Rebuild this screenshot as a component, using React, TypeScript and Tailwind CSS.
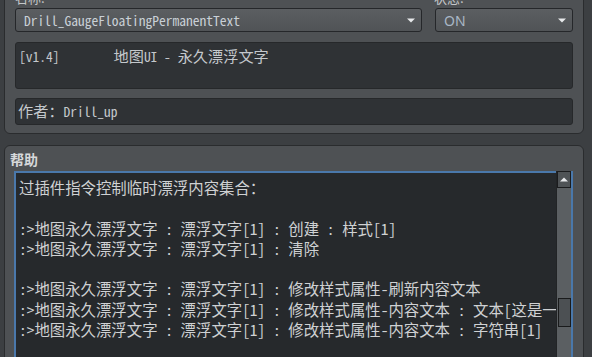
import React from "react";

const CJK = /[\u3000-\u9fff\uff00-\uffef]/;

// latin glyphs sit narrower than the CJK ones in the top fields, so CJK runs get their own size
function Mixed({ text }: { text: string }) {
  const runs = text.match(/[\u3000-\u9fff\uff00-\uffef]+|[^\u3000-\u9fff\uff00-\uffef]+/g) ?? [];
  return (
    <>
      {runs.map((r, i) =>
        CJK.test(r) ? (
          <span key={i} className="text-[15.2px]">{r}</span>
        ) : (
          <span key={i}>{r}</span>
        )
      )}
    </>
  );
}

function Arrow({ up = false }: { up?: boolean }) {
  return (
    <svg width="8" height="5" viewBox="0 0 8 5" className={up ? "rotate-180" : ""}>
      <path d="M0 0.5 L8 0.5 L4 4.5 Z" fill="#e8eaec" />
    </svg>
  );
}

const help = [
  "过插件指令控制临时漂浮内容集合：",
  "",
  ":>地图永久漂浮文字 : 漂浮文字[1] : 创建 : 样式[1]",
  ":>地图永久漂浮文字 : 漂浮文字[1] : 清除",
  "",
  ":>地图永久漂浮文字 : 漂浮文字[1] : 修改样式属性-刷新内容文本",
  ":>地图永久漂浮文字 : 漂浮文字[1] : 修改样式属性-内容文本 : 文本[这是一段文本]",
  ":>地图永久漂浮文字 : 漂浮文字[1] : 修改样式属性-内容文本 : 字符串[1]",
  "",
];

export default function App() {
  return (
    <div className="w-[592px] h-[357px] overflow-hidden bg-[#3c3f42] font-['Noto_Sans_CJK_SC',sans-serif]">
      {/* plugin group */}
      <div className="ml-[4px] w-[580px] mt-[-30px] h-[164px] border border-[#2a2c2e] rounded-[6px] bg-[#4e5154] pl-[10px] pr-[10px] pt-[19px]">
        <div className="flex gap-[13px]">
          <div className="w-[407px]">
            <div className="h-[16px] leading-[16px] text-[13px] text-[#c4c7ca] mb-[2px]">名称:</div>
            <div className="h-[24px] rounded-[3px] border border-[#25272a] bg-gradient-to-b from-[#5b5e61] to-[#505356] flex items-center pl-[8px] pr-[6px]">
              <span className="flex-1 text-[13.5px] text-[#c9d0d6] font-['Noto_Sans_Mono_CJK_SC','DejaVu_Sans_Mono',monospace] whitespace-nowrap">
                Drill_GaugeFloatingPermanentText
              </span>
              <Arrow />
            </div>
          </div>
          <div className="w-[138px]">
            <div className="h-[16px] leading-[16px] text-[13px] text-[#c4c7ca] mb-[2px] -ml-[1px]">状态:</div>
            <div className="h-[24px] rounded-[3px] border border-[#25272a] bg-gradient-to-b from-[#5b5e61] to-[#505356] flex items-center pl-[8px] pr-[6px]">
              <span className="flex-1 text-[14px] text-[#a9b7c6] font-['Noto_Sans',sans-serif]">ON</span>
              <Arrow />
            </div>
          </div>
        </div>
        <div className="mt-[10px] h-[47px] rounded-[3px] border border-[#26282a] bg-[#2f3235] pl-[3px] pt-[2px] text-[13.5px] leading-[20px] text-[#c4c8cc] font-['Noto_Sans_Mono_CJK_SC','DejaVu_Sans_Mono',monospace] whitespace-pre">
          <Mixed text={"[v1.4]        地图UI - 永久漂浮文字"} />
        </div>
        <div className="mt-[9px] h-[27px] rounded-[3px] border border-[#26282a] bg-[#2f3235] pl-[2px] pb-[2px] flex items-center text-[13.5px] text-[#c4c8cc] font-['Noto_Sans_Mono_CJK_SC','DejaVu_Sans_Mono',monospace] whitespace-pre">
          <span><Mixed text={"作者：Drill_up"} /></span>
        </div>
      </div>

      {/* help group */}
      <div className="ml-[4px] w-[580px] mt-[11px] h-[260px] border border-[#2a2c2e] rounded-[6px] bg-[#4e5154] pl-[9px] pr-[10px] pt-[3px]">
        <div className="h-[20px] leading-[20px] text-[14px] font-bold text-[#d6d8da] -ml-[4px] mb-[2px]">帮助</div>
        <div className="h-[220px] border-2 border-[#4a78ab] bg-[#26292c] flex">
          <div className="flex-1 overflow-hidden pl-[3px] pt-[4px] text-[15.4px] leading-[20.3px] text-[#cfd1d3] font-['Noto_Sans_Mono_CJK_SC','DejaVu_Sans_Mono','Noto_Sans_CJK_SC',monospace] whitespace-pre">
            {help.map((l, i) => (
              <div key={i} className="h-[20.3px]">{l}</div>
            ))}
          </div>
          <div className="w-[15px] -mt-[2px] bg-[#5b5f62] border-l border-[#222426] flex flex-col">
            <div className="h-[17px] border border-[#1b1c1e] bg-[#4f5356] flex items-center justify-center">
              <Arrow up />
            </div>
            <div className="h-[110px]" />
            <div className="ml-[1px] w-[13px] h-[29px] border border-[#1a1b1c] bg-[#4c5053]" />
          </div>
        </div>
      </div>
    </div>
  );
}
